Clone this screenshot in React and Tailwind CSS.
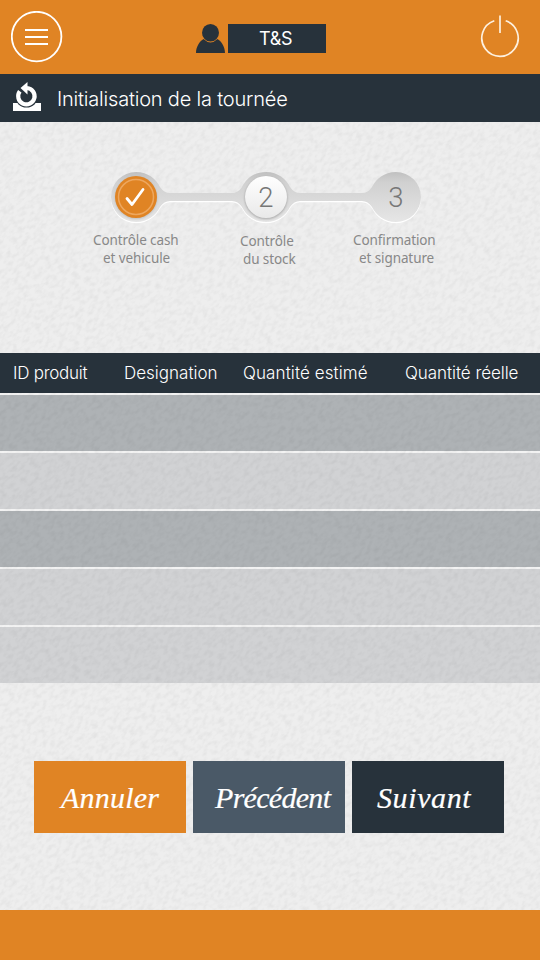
import React from "react";

const SANS = "font-['Inter','Liberation_Sans',sans-serif]";
const LABEL = "font-['Noto_Sans','Open_Sans',sans-serif]";
const SERIF = "font-['Liberation_Serif',serif]";

function PaperTexture() {
  return (
    <svg className="pointer-events-none absolute inset-0 h-full w-full" aria-hidden="true">
      <filter id="paper" x="0" y="0" width="100%" height="100%" colorInterpolationFilters="sRGB">
        <feTurbulence type="fractalNoise" baseFrequency="0.16 0.26" numOctaves="3" seed="8" />
        <feColorMatrix values="0 0 0 0 0  0 0 0 0 0  0 0 0 0 0  0.1 0 0 0 -0.04" />
      </filter>
      <g transform="rotate(-40 270 480)">
        <rect x="-350" y="-200" width="1240" height="1360" filter="url(#paper)" />
      </g>
    </svg>
  );
}

function MenuIcon() {
  return (
    <svg width="52" height="52" viewBox="0 0 52 52" fill="none" stroke="#fff">
      <circle cx="25.6" cy="25.6" r="24.8" strokeWidth="1.8" />
      <path d="M14 19h23M14 26h23M14 33h23" strokeWidth="2" />
    </svg>
  );
}

function UserIcon() {
  return (
    <svg width="30" height="30" viewBox="0 0 30 30">
      <path d="M0 29C0 22.500 4 17 7.500 15Q14.500 21.800 21.500 15C25 17 29 22.500 29 29Z" fill="#27323b" />
      <ellipse cx="14.500" cy="8.800" rx="8.500" ry="8.800" fill="#27323b" />
    </svg>
  );
}

function PowerIcon() {
  return (
    <svg width="40" height="44" viewBox="0 0 40 44" fill="none" stroke="#fdf0df" strokeWidth="1.7">
      <path d="M14.300 5.800A18.200 18.200 0 1 0 25.700 5.800" />
      <path d="M20 0.500V18" />
    </svg>
  );
}

function RouteIcon() {
  return (
    <svg width="28" height="30" viewBox="0 0 28 30">
      <path d="M0 21H28V29H0Z" fill="#fff" />
      <circle cx="13.500" cy="14" r="11.500" fill="#27323b" />
      <path d="M6.800 9.300A8.200 8.200 0 1 0 14 6" fill="none" stroke="#fff" strokeWidth="4.200" />
      <path d="M14.500 0V12.500L7.500 6Z" fill="#fff" />
    </svg>
  );
}

function Stepper() {
  const track =
    "M136 172C148 172 156 179 160 187Q164 193 170 193H232Q238 193 242 187C246 179 254 172 266 172S286 179 290 187Q294 193 300 193H362Q368 193 372 187C376 179 384 172 396 172A25 25 0 0 1 396 222C384 222 376 215 372 207Q368 201 362 201H300Q294 201 290 207C286 215 278 222 266 222S246 215 242 207Q238 201 232 201H170Q164 201 160 207C156 215 148 222 136 222A25 25 0 0 1 136 172Z";
  return (
    <svg width="320" height="56" viewBox="106 169 320 56">
      <defs>
        <linearGradient id="track" x1="0" y1="0" x2="0" y2="1">
          <stop offset="0" stopColor="#c0c0c0" />
          <stop offset="0.2" stopColor="#d0d0d0" />
          <stop offset="1" stopColor="#e6e6e6" />
        </linearGradient>
        <linearGradient id="knob" x1="0" y1="0" x2="0" y2="1">
          <stop offset="0" stopColor="#ffffff" />
          <stop offset="1" stopColor="#e9e9e9" />
        </linearGradient>
        <filter id="shade" x="-30%" y="-30%" width="160%" height="160%">
          <feGaussianBlur stdDeviation="1.1" />
        </filter>
      </defs>
      <path d={track} transform="translate(0 1.200)" fill="#fff" />
      <path d={track} fill="url(#track)" />
      <circle cx="136" cy="198" r="21" fill="#999" opacity="0.5" filter="url(#shade)" />
      <circle cx="136" cy="197" r="21" fill="#e08424" />
      <circle cx="136" cy="197" r="17.500" fill="none" stroke="#eda75f" strokeWidth="1.500" />
      <path d="M127 198.500L132 204.500L143 189.500" fill="none" stroke="#fff" strokeWidth="2.800" strokeLinecap="round" strokeLinejoin="round" />
      <circle cx="266" cy="198" r="21.300" fill="#888" opacity="0.6" filter="url(#shade)" />
      <circle cx="266" cy="197" r="21" fill="url(#knob)" />
      <g className="font-['Roboto','Liberation_Sans',sans-serif] text-[27.5px] font-light" fill="#777" textAnchor="middle">
        <text x="266" y="207">2</text>
        <text x="396" y="207">3</text>
      </g>
    </svg>
  );
}

const ROWS = ["bg-[#aeb2b5]", "bg-[#d1d2d4]", "bg-[#aeb2b5]", "bg-[#d1d2d4]", "bg-[#d1d2d4]"];

export default function App() {
  return (
    <div className={`relative flex h-[960px] w-[540px] flex-col overflow-hidden bg-[#eeeeee] ${SANS}`}>
      <PaperTexture />
      <header className="relative flex h-[74px] shrink-0 bg-[#e08424]">
        <div className="ml-[11px] mt-[11px] h-[52px] w-[52px]"><MenuIcon /></div>
        <div className="ml-[133px] mt-[24px] h-[30px] w-[30px]"><UserIcon /></div>
        <div className="ml-[2px] mt-[24px] flex h-[29px] w-[98px] items-center bg-[#27323b] pl-[31px] text-[18px] tracking-[-0.3px] text-white">
          T&amp;S
        </div>
        <div className="ml-[154px] mt-[15px]"><PowerIcon /></div>
      </header>

      <div className="relative flex h-[48px] shrink-0 bg-[#27323b] text-white">
        <div className="ml-[13px] mt-[8px] w-[28px]"><RouteIcon /></div>
        <h1 className="ml-[16px] mt-px whitespace-nowrap text-[20px] font-light leading-[48px] tracking-[-0.2px]">
          Initialisation de la tournée
        </h1>
      </div>

      <section className="relative h-[231px] shrink-0 pt-[47px]">
        <div className="ml-[106px] h-[56px]"><Stepper /></div>
        <div className={`flex whitespace-nowrap text-[13.5px] leading-[18px] tracking-[-0.1px] text-[#888888] ${LABEL}`}>
          <div className="ml-[93px] mt-[6px] w-[147px]">
            <p>Contrôle cash</p>
            <p className="ml-[10px]">et vehicule</p>
          </div>
          <div className="mt-[7px] w-[113px]">
            <p>Contrôle</p>
            <p className="ml-[3px]">du stock</p>
          </div>
          <div className="mt-[6px]">
            <p>Confirmation</p>
            <p className="ml-[6px]">et signature</p>
          </div>
        </div>
      </section>

      <section className="relative shrink-0">
        <div className="flex h-[40px] whitespace-nowrap bg-[#27323b] text-[17px] font-light leading-[40px] text-white">
          <div className="ml-[13px] w-[111px] tracking-[-0.25px]">ID produit</div>
          <div className="w-[119px]">Designation</div>
          <div className="w-[162px] tracking-[0.1px]">Quantité estimé</div>
          <div className="tracking-[-0.05px]">Quantité réelle</div>
        </div>
        <div className="relative flex flex-col gap-[2px] bg-[#f3f3f3] pt-[2px]">
          {ROWS.map((color, i) => (
            <div key={i} className={`h-[56px] ${color}`} />
          ))}
          <PaperTexture />
        </div>
      </section>

      <div className={`relative mt-[78px] flex shrink-0 gap-[7px] pl-[34px] text-[30px] italic leading-[73px] text-white [-webkit-text-stroke:0.2px_white] ${SERIF}`}>
        <button className="h-[72px] w-[152px] bg-[#e08424] pl-[27px] text-left tracking-[0.2px]">Annuler</button>
        <button className="h-[72px] w-[152px] bg-[#4a5967] pl-[22px] text-left tracking-[-0.7px]">Précédent</button>
        <button className="h-[72px] w-[152px] bg-[#27323b] pl-[25px] text-left tracking-[0.6px]">Suivant</button>
      </div>

      <footer className="relative mt-auto h-[50px] shrink-0 bg-[#e08424]" />
    </div>
  );
}
